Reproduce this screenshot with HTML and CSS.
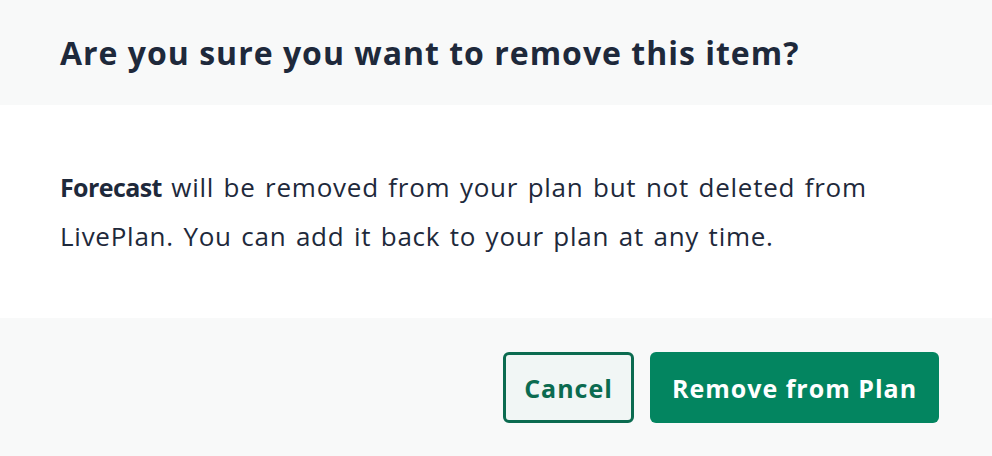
FILE: index.html
```html
<!DOCTYPE html>
<html>
<head>
<meta charset="utf-8">
<link rel="stylesheet" href="styles.css">
</head>
<body>
<div class="modal">
  <div class="modal-header">
    <h1 class="title">Are you sure you want to remove this item?</h1>
  </div>
  <div class="modal-body">
    <p class="message"><strong>Forecast</strong> will be removed from your plan but not deleted from LivePlan. You can add it back to your plan at any time.</p>
  </div>
  <div class="modal-footer">
    <button class="btn btn-secondary">Cancel</button>
    <button class="btn btn-primary">Remove from Plan</button>
  </div>
</div>
</body>
</html>
```

FILE: styles.css
```css
* { box-sizing: border-box; }
html, body { margin: 0; padding: 0; background: #ffffff; }
body {
  font-family: "Open Sans", Lato, sans-serif;
  color: #1e293b;
  width: 992px;
  height: 456px;
  overflow: hidden;
}
.modal { display: flex; flex-direction: column; height: 456px; }
.modal-header {
  background: #f8f9f9;
  height: 105px;
  padding: 0 60px;
  display: flex;
  align-items: center;
}
.title {
  margin: 0;
  font-size: 32px;
  font-weight: 700;
  letter-spacing: 1px;
  color: #1e293b;
}
.modal-body {
  height: 213px;
  padding: 0 60px;
  display: flex;
  align-items: center;
}
.message {
  margin: 0;
  font-size: 26px;
  letter-spacing: 0.75px;
  word-spacing: 2px;
  line-height: 49px;
  color: #1e293b;
  max-width: 840px;
}
.message strong {
  font-weight: 700;
  font-size: 25px;
  letter-spacing: -0.6px;
  word-spacing: 0;
}
.modal-footer {
  flex: 1;
  background: #f8f9f9;
  display: flex;
  justify-content: flex-end;
  align-items: flex-start;
  padding: 34px 53px 0 0;
  gap: 16px;
}
.btn {
  height: 71px;
  font-family: "Open Sans", Lato, sans-serif;
  font-size: 25px;
  font-weight: 700;
  letter-spacing: 1px;
  border-radius: 6px;
  cursor: pointer;
  padding: 0;
}
.btn-secondary {
  width: 131px;
  background: #f1f6f5;
  border: 3px solid #0b6b50;
  color: #0b6b50;
}
.btn-primary {
  width: 289px;
  background: #038560;
  border: none;
  color: #ffffff;
}
```
